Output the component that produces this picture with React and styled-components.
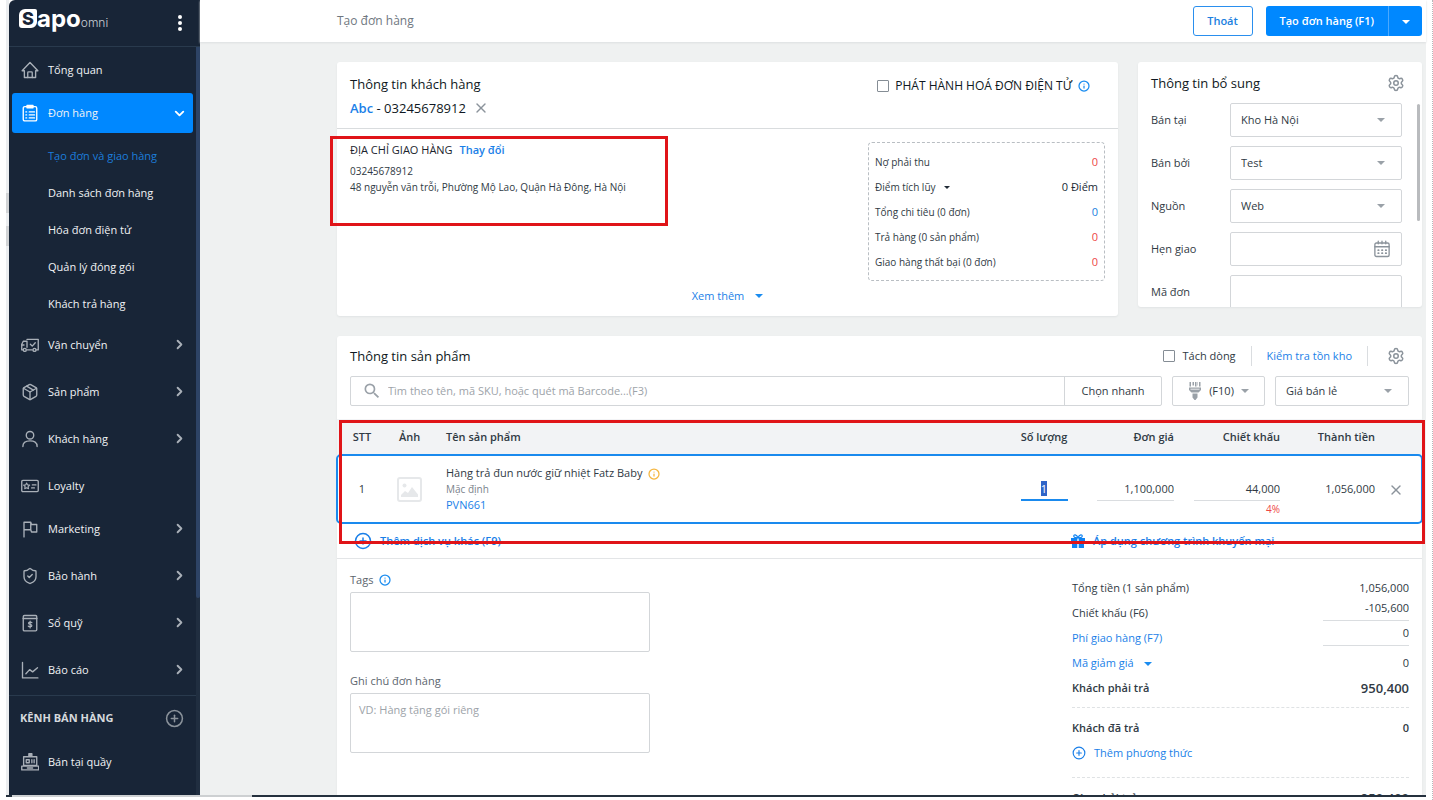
import React, { useEffect, useRef } from 'react'
import styled, { createGlobalStyle, css } from 'styled-components';
import { Package, ShieldCheck, CirclePlus, ChevronRight, ChevronDown, X, Info, Settings } from 'lucide-react';
import { MdSearch } from 'react-icons/md';

const submenu = [
  'Tạo đơn và giao hàng',
  'Danh sách đơn hàng',
  'Hóa đơn điện tử',
  'Quản lý đóng gói',
  'Khách trả hàng',
]

const menu = [
  { label: 'Vận chuyển', icon: TruckIcon, more: true },
  { label: 'Sản phẩm', icon: Package, more: true },
  { label: 'Khách hàng', icon: PersonIcon, more: true },
  { label: 'Loyalty', icon: CardIcon },
  { label: 'Marketing', icon: FlagIcon, more: true },
  { label: 'Bảo hành', icon: ShieldCheck, more: true },
  { label: 'Sổ quỹ', icon: CashBookIcon, more: true },
  { label: 'Báo cáo', icon: ReportIcon, more: true },
]

const stats = [
  { label: 'Nợ phải thu', value: '0', color: '#ee4747' },
  { label: 'Điểm tích lũy', value: '0 Điểm', color: '#212b36', caret: true },
  { label: 'Tổng chi tiêu (0 đơn)', value: '0', color: '#1a7fe0' },
  { label: 'Trả hàng (0 sản phẩm)', value: '0', color: '#ee4747' },
  { label: 'Giao hàng thất bại (0 đơn)', value: '0', color: '#ee4747' },
]

function Svg({ size = 18, children, ...rest }) {
  return (
    <svg width={size} height={size} viewBox="0 0 24 24" fill="none" stroke="currentColor" strokeWidth="1.8" strokeLinecap="round" strokeLinejoin="round" {...rest}>
      {children}
    </svg>
  )
}

function HomeIcon() {
  return (
    <Svg>
      <path d="M1.5 13 12 2l10.500 11h-3v9H4.500v-9z" />
      <path d="M9 22v-6.500a1 1 0 0 1 1-1h4a1 1 0 0 1 1 1V22" />
    </Svg>
  )
}

function OrderIcon() {
  return (
    <Svg>
      <rect x="3" y="3.500" width="18" height="19" rx="2" />
      <path d="M8 2h8v3H8z" />
      <path d="M11 10.500h7M11 14.500h7M11 18.500h7M6.500 10.500h1M6.500 14.500h1M6.500 18.500h1" />
    </Svg>
  )
}

function TruckIcon() {
  return (
    <Svg>
      <path d="M8 18.500h7M8 4.500h15v14h-2.500M2.500 18.500H1V11l2-4h5v8" />
      <circle cx="5" cy="18.500" r="2" />
      <circle cx="18" cy="18.500" r="2" />
      <path d="m12.500 11 2.500 2.500L19 9M1 12h3" />
    </Svg>
  )
}

function PersonIcon() {
  return (
    <Svg>
      <circle cx="12" cy="7" r="5" />
      <path d="M2.500 22c0-5.500 4-7.500 9.500-7.500s9.500 2 9.500 7.500" />
    </Svg>
  )
}

function CardIcon() {
  return (
    <Svg>
      <rect x="1" y="4.500" width="22" height="15" rx="1.500" />
      <path d="m7.500 8 1.200 2.500 2.800.3-2 2 .5 2.800-2.500-1.300L5 15.600l.5-2.800-2-2 2.800-.3zM15 10.500h5M14 14.500h4" strokeWidth="1.500" />
    </Svg>
  )
}

function FlagIcon() {
  return (
    <Svg>
      <path d="M4 22.500V3h9l1 3h7v10h-7l-1-3H4M13 3v10" />
    </Svg>
  )
}

function CashBookIcon() {
  return (
    <Svg>
      <rect x="3" y="2" width="18" height="20.500" rx="1.500" />
      <path d="M3 6h18" strokeWidth="2.200" />
      <path d="M14.500 11.500c-.5-.8-4.500-1.200-4.500.8 0 1.900 4.500 1 4.500 3.200 0 2-4 1.700-4.800.6M12.200 9.500v9" strokeWidth="1.600" />
    </Svg>
  )
}

function ReportIcon() {
  return (
    <Svg>
      <path d="M2 2v20.500h20.500" />
      <path d="m6.500 17 5-5.500 4 3L22 9" />
    </Svg>
  )
}

function CounterIcon() {
  return (
    <Svg>
      <path d="M10.500 1h4v3.500h-4z" fill="currentColor" />
      <path d="M3.500 5h17.500v11.500h-17.500zM1 17.500h22.500v5H1z" />
      <path d="M7 9h4v4H7zM14.500 9v4M17.500 9v4M8.500 20h7" />
    </Svg>
  )
}

function CalendarIcon() {
  return (
    <Svg>
      <rect x="2.500" y="4" width="19" height="18" rx="2" />
      <path d="M2.500 9h19M7 1.500V5M12 1.500V5M17 1.500V5" />
      <path d="M7 13.500h.5M12 13.500h.5M17 13.500h.5M7 17.500h.5M12 17.500h.5M17 17.500h.5" strokeWidth="2.400" />
    </Svg>
  )
}

function BrushIcon() {
  return (
    <svg width="14" height="18" viewBox="0 0 14 18" fill="#9aa1a8">
      <path d="M1.500 0H3v4.500H1.500zM4.500 0H6v3.500H4.500zM7 0h1.500v4.500H7zM9.500 0H10v3.500h-.500zM11 0h1.500v4.500H11zM1 5.500h12V8l-2.500 2.500h-7L1 8zM4.500 11.500h5v4l-2 2.500h-1l-2-2.500z" />
      <path d="M2.500 7.200h9" stroke="#fff" strokeWidth=".8" />
    </svg>
  )
}

function GiftIcon() {
  return (
    <svg width="14" height="14" viewBox="0 0 14 14">
      <path d="M0 4h6.300v3.500H0zM7.700 4H14v3.500H7.700zM1 8.500h5.300V14H1zM7.700 8.500H13V14H7.700z" fill="#0f83f2" />
      <path d="M7 3.800C5.500 0 2.500.200 2.800 2.400 3 3.500 5 3.800 7 3.800s4-.3 4.200-1.400C11.500.200 8.500 0 7 3.800z" fill="none" stroke="#0f83f2" strokeWidth="1.200" />
    </svg>
  )
}

function PhotoIcon() {
  return (
    <svg width="25" height="25" viewBox="0 0 25 25">
      <rect x="1" y="1" width="23" height="23" rx="2" fill="#fff" stroke="#e6e8ea" strokeWidth="2" />
      <circle cx="7.500" cy="8.500" r="2" fill="#e6e8ea" />
      <path d="M4 20v-2l4-4 3 2 4-6 6 7.500V20z" fill="#e6e8ea" />
    </svg>
  )
}

function Select({ id, label, value, width }) {
  return (
    <SelectWrap $width={width}>
      <NativeSelect id={id} aria-label={label} defaultValue={value}>
        <option>{value}</option>
      </NativeSelect>
      <SelectCaret><Caret $color="#9aa1a8" /></SelectCaret>
    </SelectWrap>
  )
}

function Sidebar() {
  return (
    <SideColumn>
      <SideHead>
        <Logo href="#">
          <LogoMark>S</LogoMark>
          <LogoName>apo</LogoName>
          <LogoSub>omni</LogoSub>
        </Logo>
        <DotsButton aria-label="Menu"><i /><i /><i /></DotsButton>
      </SideHead>
      <SideBody>
        <Nav>
          <NavItem href="#"><HomeIcon />Tổng quan</NavItem>
          <NavItem href="#" $active><OrderIcon /><NavText>Đơn hàng</NavText><ChevronDown size={15} strokeWidth={3} /></NavItem>
          <SubList>
            {submenu.map((s, i) => <SubItem key={s} href="#" $active={i === 0}>{s}</SubItem>)}
          </SubList>
          {menu.map(({ label, icon: Icon, more }) => (
            <NavItem key={label} href="#" $more={more}>
              <Icon size={18} strokeWidth={1.8} />
              <NavText>{label}</NavText>
              {more && <ChevronRight size={15} strokeWidth={3} />}
            </NavItem>
          ))}
          <Channels>
            KÊNH BÁN HÀNG
            <IconButton aria-label="Thêm kênh"><CirclePlus size={19} strokeWidth={1.900} /></IconButton>
          </Channels>
          <NavItem href="#"><CounterIcon />Bán tại quầy</NavItem>
        </Nav>
        <SideTrack><SideThumb /></SideTrack>
      </SideBody>
    </SideColumn>
  )
}

function Customer() {
  return (
    <Card>
      <CustomerHead>
        <div>
          <Title>Thông tin khách hàng</Title>
          <CustomerLine>
            <a href="#">Abc</a>&nbsp;- 03245678912
            <IconButton aria-label="Bỏ chọn"><X size={16} strokeWidth={2} /></IconButton>
          </CustomerLine>
        </div>
        <InvoiceLabel>
          <Check type="checkbox" />
          PHÁT HÀNH HOÁ ĐƠN ĐIỆN TỬ
          <Info size={12} color="#1a8cf0" strokeWidth={2.500} />
        </InvoiceLabel>
      </CustomerHead>
      <CustomerBody>
        <Address>
          <AddressTitle>ĐỊA CHỈ GIAO HÀNG <a href="#">Thay đổi</a></AddressTitle>
          <p>03245678912</p>
          <p>48 nguyễn văn trỗi, Phường Mộ Lao, Quận Hà Đông, Hà Nội</p>
          <AddressMark />
        </Address>
        <StatBox>
          {stats.map((s) => (
            <StatRow key={s.label}>
              <StatName>{s.label}{s.caret && <Caret $small $color="#212b36" />}</StatName>
              <StatValue $color={s.color}>{s.value}</StatValue>
            </StatRow>
          ))}
        </StatBox>
      </CustomerBody>
      <MoreButton>Xem thêm<Caret $color="#1a8cf0" /></MoreButton>
    </Card>
  )
}

function Extra() {
  return (
    <ExtraCard>
      <ExtraHead>
        <Title>Thông tin bổ sung</Title>
        <IconButton aria-label="Cài đặt"><Settings size={18} strokeWidth={2} /></IconButton>
      </ExtraHead>
      <ExtraBody>
        <Fields>
          <label htmlFor="store">Bán tại</label>
          <Select id="store" value="Kho Hà Nội" />
          <label htmlFor="seller">Bán bởi</label>
          <Select id="seller" value="Test" />
          <label htmlFor="source">Nguồn</label>
          <Select id="source" value="Web" />
          <label htmlFor="date">Hẹn giao</label>
          <DateBox>
            <input id="date" type="text" />
            <IconButton aria-label="Chọn ngày"><CalendarIcon /></IconButton>
          </DateBox>
          <label htmlFor="code">Mã đơn</label>
          <TextBox id="code" type="text" />
        </Fields>
        <ExtraThumb />
      </ExtraBody>
    </ExtraCard>
  )
}

function Products() {
  const qty = useRef(null)

  useEffect(() => {
    qty.current.focus()
    qty.current.select()
  }, [])

  return (
    <ProductCard>
      <ProductHead>
        <Title>Thông tin sản phẩm</Title>
        <HeadTools>
          <label><Check type="checkbox" />Tách dòng</label>
          <StockLink href="#">Kiểm tra tồn kho</StockLink>
          <IconButton aria-label="Cài đặt"><Settings size={18} strokeWidth={2} /></IconButton>
        </HeadTools>
      </ProductHead>
      <SearchRow>
        <SearchBox>
          <MdSearch size={20} />
          <input aria-label="Tìm sản phẩm" placeholder="Tìm theo tên, mã SKU, hoặc quét mã Barcode...(F3)" />
          <QuickButton>Chọn nhanh</QuickButton>
        </SearchBox>
        <ScanButton><BrushIcon />(F10)<Caret $color="#9aa1a8" /></ScanButton>
        <Select label="Giá bán" value="Giá bán lẻ" width="134px" />
      </SearchRow>
      <Lines>
        <Table>
          <colgroup>
            <col width="50" /><col width="45" /><col /><col width="68" /><col width="96" /><col width="106" /><col width="95" /><col width="47" />
          </colgroup>
          <thead>
            <tr>
              <Th $align="center">STT</Th>
              <Th $align="center">Ảnh</Th>
              <Th $name>Tên sản phẩm</Th>
              <Th $align="center">Số lượng</Th>
              <Th $align="right">Đơn giá</Th>
              <Th $align="right">Chiết khấu</Th>
              <Th $align="right">Thành tiền</Th>
              <Th />
            </tr>
          </thead>
          <tbody>
            <Line>
              <Td $align="center">1</Td>
              <Td $align="center"><PhotoIcon /></Td>
              <Td $name>
                <ProductName>Hàng trả đun nước giữ nhiệt Fatz Baby <Info size={12} color="#f5b63f" strokeWidth={2.500} /></ProductName>
                <Variant>Mặc định</Variant>
                <a href="#">PVN661</a>
              </Td>
              <Td $align="center" $top><LineInput ref={qty} aria-label="Số lượng" defaultValue="1" $qty $width="47px" /></Td>
              <Td $align="right" $top><LineInput aria-label="Đơn giá" defaultValue="1,100,000" $width="77px" /></Td>
              <Td $align="right" $top>
                <LineInput aria-label="Chiết khấu" defaultValue="44,000" $width="86px" />
                <Percent>4%</Percent>
              </Td>
              <Td $align="right">1,056,000</Td>
              <DeleteTd><IconButton aria-label="Xóa"><X size={16} strokeWidth={2} /></IconButton></DeleteTd>
            </Line>
          </tbody>
        </Table>
        <ServiceRow>
          <LinkButton $strong><CirclePlus size={18} />Thêm dịch vụ khác (F9)</LinkButton>
          <Promo><LinkButton $strong><GiftIcon />Áp dụng chương trình khuyến mại</LinkButton></Promo>
        </ServiceRow>
        <LinesMark />
      </Lines>
      <Bottom>
        <Notes>
          <label htmlFor="tags">Tags <Info size={12} color="#1a8cf0" strokeWidth={2.500} /></label>
          <Area id="tags" />
          <label htmlFor="note">Ghi chú đơn hàng</label>
          <Area id="note" placeholder="VD: Hàng tặng gói riêng" />
        </Notes>
        <Summary>
          <SumRow><span>Tổng tiền (1 sản phẩm)</span><span>1,056,000</span></SumRow>
          <SumRow><label htmlFor="discount">Chiết khấu (F6)</label><SumInput id="discount" defaultValue="-105,600" /></SumRow>
          <SumRow><a href="#">Phí giao hàng (F7)</a><SumInput aria-label="Phí giao hàng" defaultValue="0" /></SumRow>
          <SumRow><a href="#">Mã giảm giá<Caret $wide $color="#1a8cf0" /></a><span>0</span></SumRow>
          <SumRow $strong><span>Khách phải trả</span><Amount>950,400</Amount></SumRow>
          <Dashes />
          <SumRow $strong><span>Khách đã trả</span><span>0</span></SumRow>
          <SumRow><LinkButton><CirclePlus size={14} />Thêm phương thức</LinkButton></SumRow>
          <Dashes $gap />
          <SumRow $strong><span>Còn phải trả</span><Amount>950,400</Amount></SumRow>
        </Summary>
      </Bottom>
    </ProductCard>
  )
}

function App() {
  return (
    <>
      <GlobalStyle />
      <Frame>
        <Window>
          <Gutter><i /><i /></Gutter>
          <Sidebar />
          <Main>
            <TopBar>
              <h1>Tạo đơn hàng</h1>
              <ExitButton>Thoát</ExitButton>
              <CreateButton>Tạo đơn hàng (F1)</CreateButton>
              <CreateMore aria-label="Tùy chọn khác"><Caret $color="#fff" /></CreateMore>
            </TopBar>
            <Content>
              <Customer />
              <Extra />
              <Products />
            </Content>
          </Main>
        </Window>
        <TaskLine><i /></TaskLine>
      </Frame>
    </>
  )
}

export default App

const GlobalStyle = createGlobalStyle`
* {
  box-sizing: border-box;
}
body {
  margin: 0;
  background: #fff;
  color: #303a44;
  font-family: "Open Sans", "Noto Sans", sans-serif;
  font-size: 11px;
  line-height: 16px;
}
h1, h2, p {
  margin: 0;
}
a {
  color: #1a7fe8;
  text-decoration: none;
}
button, input, select, textarea {
  font: inherit;
  color: inherit;
}
button {
  border: 0;
  padding: 0;
  background: none;
}
input {
  border: 0;
  padding: 0;
  min-width: 0;
  background: none;
  outline: none;
}
::placeholder {
  color: #9da3a9;
}
svg {
  flex: none;
}
`

const Frame = styled.div`
height: 100vh;
display: flex;
flex-direction: column;
padding: 0 6px 3px;
border-right: 1px dotted #b5b8bb;
overflow: hidden;
`

const Window = styled.div`
display: flex;
flex: 1;
min-height: 0;
`

const Gutter = styled.div`
width: 3px;
padding-top: 193px;
background: #eceef0;

i {
  display: block;
  height: 20px;
  margin-bottom: 13px;
  background: #d2d4d6;
}
`

const TaskLine = styled.div`
height: 2px;
background: #25313e;

i {
  display: block;
  width: 240px;
  height: 2px;
  margin-left: 6px;
  background: #cdd0d2;
}
`

const SideColumn = styled.aside`
width: 191px;
display: flex;
flex-direction: column;
background: #182537;
color: #f1f3f5;
border-top-left-radius: 6px;
overflow: hidden;
`

const SideHead = styled.div`
height: 47px;
flex: none;
display: flex;
align-items: flex-start;
justify-content: space-between;
padding: 9px 18px 0 10px;
border-bottom: 1px solid #293a4d;
`

const Logo = styled.a`
display: flex;
color: #fff;
font-family: Inter, sans-serif;
line-height: 20px;
`

const LogoMark = styled.span`
width: 18px;
height: 19px;
border-radius: 6px 2px 6px 3px;
background: #fff;
color: #182537;
font-size: 18px;
font-weight: 800;
line-height: 19px;
text-align: center;
`

const LogoName = styled.span`
font-size: 24px;
font-weight: 700;
`

const LogoSub = styled.span`
padding-top: 4px;
font-size: 12px;
font-weight: 300;
color: #c9ced4;
`

const DotsButton = styled.button`
display: flex;
flex-direction: column;
gap: 2px;
padding-top: 6px;

i {
  width: 4px;
  height: 4px;
  border-radius: 2px;
  background: #fff;
}
`

const SideBody = styled.div`
display: flex;
flex: 1;
min-height: 0;
`

const Nav = styled.nav`
flex: 1;
padding-top: 1px;
`

const SideTrack = styled.div`
width: 4px;
background: #202e40;
`

const SideThumb = styled.div`
height: 551px;
border-radius: 0 0 2px 2px;
background: #2d4365;
`

const NavItem = styled.a`
display: flex;
align-items: center;
gap: 9px;
height: 43px;
margin-bottom: ${(p) => (p.$more ? '4px' : '0')};
padding: 0 9px 0 12px;
color: #f1f3f5;

svg {
  color: #a9b0b8;
}

${(p) => p.$active && css`
  height: 40px;
  margin: 2px 3px 4px;
  padding: 0 6px 0 9px;
  border-radius: 3px;
  background: #0088ff;

  svg {
    color: #fff;
  }
`}
`

const NavText = styled.span`
flex: 1;
`

const SubList = styled.div`
display: flex;
flex-direction: column;
padding-bottom: 1px;
`

const SubItem = styled.a`
height: 37px;
padding-left: 39px;
line-height: 37px;
color: ${(p) => (p.$active ? '#1c7ddb' : '#f1f3f5')};
`

const Channels = styled.div`
display: flex;
align-items: center;
justify-content: space-between;
height: 45px;
padding: 0 12px 0 11px;
border-top: 1px solid #293a4d;
font-weight: 700;
color: #d5d9dd;
`

const IconButton = styled.button`
display: inline-flex;
align-items: center;
color: #8b939b;
`

const Main = styled.main`
flex: 1;
min-width: 0;
display: flex;
flex-direction: column;
background: #eff1f1;
`

const TopBar = styled.header`
display: flex;
align-items: center;
height: 42px;
flex: none;
padding: 0 4px 0 137px;
background: #fff;
box-shadow: 0 1px 2px #dcdfe0;

h1 {
  flex: 1;
  font-size: 12px;
  font-weight: 400;
  color: #6f7780;
}
`

const ExitButton = styled.button`
height: 30px;
width: 60px;
margin-right: 13px;
border: 1px solid #2a8fee;
border-radius: 3px;
font-weight: 600;
color: #1a7fe0;
`

const CreateButton = styled.button`
height: 30px;
padding: 0 14px;
border-radius: 3px 0 0 3px;
background: #0088ff;
color: #fff;
font-weight: 600;
`

const CreateMore = styled.button`
height: 30px;
width: 34px;
border-left: 1px solid #4aa9ff;
border-radius: 0 3px 3px 0;
background: #0088ff;
`

const Caret = styled.i`
display: inline-block;
vertical-align: middle;
margin-left: ${(p) => (p.$wide ? '10px' : p.$small ? '8px' : '0')};
border: ${(p) => (p.$small ? '3px' : '4px')} solid transparent;
border-top-color: ${(p) => p.$color};
border-bottom: 0;
`

const Content = styled.div`
flex: 1;
min-height: 0;
display: grid;
grid-template-columns: minmax(0, 1fr) 284px;
grid-template-rows: auto auto;
align-items: start;
align-content: start;
gap: 20px;
padding: 20px 4px 0 137px;
overflow: hidden;
`

const Card = styled.section`
border-radius: 3px;
background: #fff;
box-shadow: 0 1px 2px #e0e3e4;
`

const Title = styled.h2`
font-size: 13px;
line-height: 24px;
font-weight: 500;
color: #0f1822;
`

const CustomerHead = styled.div`
display: flex;
justify-content: space-between;
padding: 10px 28px 8px 13px;
border-bottom: 1px solid #d9dcde;
`

const CustomerLine = styled.div`
display: flex;
align-items: center;
height: 24px;
font-size: 13px;
color: #0f1822;

a {
  font-weight: 600;
}
button {
  margin-left: 7px;
}
`

const InvoiceLabel = styled.label`
display: flex;
align-items: center;
gap: 6px;
height: 28px;
font-size: 12px;
color: #0f1822;
`

const Check = styled.input`
appearance: none;
width: 12px;
height: 12px;
margin: 0;
border: 1px solid #858d95;
border-radius: 1px;
`

const CustomerBody = styled.div`
display: flex;
justify-content: space-between;
padding: 13px 13px 0;
`

const Address = styled.div`
position: relative;
font-size: 10px;
`

const AddressTitle = styled.div`
margin-bottom: 5px;
font-size: 11px;
color: #1b242e;

a {
  margin-left: 4px;
  font-weight: 600;
}
`

const mark = css`
position: absolute;
border: 3px solid #e01418;
pointer-events: none;
`

const AddressMark = styled.div`
${mark}
top: -6px;
left: -20px;
width: 338px;
height: 90px;
`

const StatBox = styled.div`
width: 237px;
padding: 6px;
border: 1px dashed #b9bec3;
border-radius: 4px;
`

const StatRow = styled.div`
display: flex;
align-items: center;
justify-content: space-between;
height: 25px;
`

const StatName = styled.span`
font-size: 10px;
`

const StatValue = styled.span`
color: ${(p) => p.$color};
`

const MoreButton = styled.button`
display: flex;
align-items: center;
gap: 11px;
height: 29px;
margin: 0 auto 6px;
color: #1a7fe8;
`

const ExtraCard = styled(Card)`
overflow: hidden;
`

const ExtraHead = styled.div`
display: flex;
align-items: center;
justify-content: space-between;
height: 41px;
padding: 0 17px 0 13px;
`

const ExtraBody = styled.div`
display: flex;
max-height: 204px;
overflow: hidden;
padding-right: 2px;
`

const Fields = styled.div`
flex: 1;
min-width: 0;
display: grid;
grid-template-columns: 79px minmax(0, 1fr);
grid-auto-rows: 34px;
align-items: center;
row-gap: 9px;
padding: 0 15px 0 13px;
`

const ExtraThumb = styled.div`
flex: none;
width: 3px;
height: 117px;
margin-top: 1px;
border-radius: 2px;
background: #b9bbbe;
`

const box = css`
border: 1px solid #d3d6d9;
border-radius: 2px;
background: #fff;
`

const SelectWrap = styled.div`
${box}
position: relative;
align-self: stretch;
display: flex;
width: ${(p) => p.$width || 'auto'};
`

const NativeSelect = styled.select`
appearance: none;
flex: 1;
min-width: 0;
border: 0;
padding: 0 28px 0 10px;
background: transparent;
`

const SelectCaret = styled.span`
position: absolute;
right: 16px;
top: 0;
bottom: 0;
display: flex;
align-items: center;
pointer-events: none;
`

const DateBox = styled.div`
${box}
align-self: stretch;
display: flex;
padding: 0 10px;

input {
  flex: 1;
}
`

const TextBox = styled.input`
${box}
align-self: stretch;
padding: 0 10px;
`

const ProductCard = styled(Card)`
grid-column: 1 / -1;
`

const ProductHead = styled.div`
display: flex;
align-items: center;
justify-content: space-between;
height: 40px;
padding: 0 17px 0 13px;
`

const HeadTools = styled.div`
display: flex;
align-items: center;

label {
  display: flex;
  align-items: center;
  gap: 7px;
}
`

const StockLink = styled.a`
margin: 0 19px 0 15px;
padding: 2px 15px;
border: 1px solid #dadde0;
border-width: 0 1px;
`

const SearchRow = styled.div`
display: flex;
gap: 10px;
height: 30px;
margin: 0 13px 13px;
`

const SearchBox = styled.div`
${box}
flex: 1;
display: flex;
align-items: center;
gap: 6px;
padding-left: 11px;

svg {
  color: #9aa1a8;
}
input {
  flex: 1;
}
`

const QuickButton = styled.button`
align-self: stretch;
width: 97px;
border-left: 1px solid #d3d6d9;
`

const ScanButton = styled.button`
${box}
display: flex;
align-items: center;
justify-content: center;
gap: 7px;
width: 93px;
`

const Lines = styled.div`
position: relative;
border-bottom: 1px solid #e3e5e7;
`

const LinesMark = styled.div`
${mark}
top: 1px;
left: 2px;
right: -3px;
height: 124px;
`

const Table = styled.table`
width: 100%;
table-layout: fixed;
border-collapse: collapse;
`

const Th = styled.th`
height: 36px;
padding: 0 0 0 ${(p) => (p.$name ? '14px' : '0')};
background: #f2f3f5;
text-align: ${(p) => p.$align || 'left'};
font-weight: 600;
`

const Line = styled.tr`
outline: 2px solid #1a8aee;
outline-offset: -1px;
border-radius: 4px;
`

const Td = styled.td`
height: 68px;
padding: ${(p) => (p.$top ? '22px' : '0')} 0 0 ${(p) => (p.$name ? '14px' : '0')};
text-align: ${(p) => p.$align || 'left'};
vertical-align: ${(p) => (p.$top ? 'top' : 'middle')};

svg {
  vertical-align: middle;
}
`

const DeleteTd = styled(Td)`
padding-left: 13px;

button {
  vertical-align: middle;
}
`

const ProductName = styled.div`
svg {
  margin-left: 3px;
}
`

const Variant = styled.div`
font-size: 10px;
color: #7a828b;
`

const LineInput = styled.input`
display: inline-block;
width: ${(p) => p.$width};
height: 24px;
border-bottom: ${(p) => (p.$qty ? '2px solid #1a8aee' : '1px solid #dadde0')};
text-align: ${(p) => (p.$qty ? 'center' : 'right')};

&::selection {
  background: #2f64c8;
  color: #fff;
}
`

const Percent = styled.div`
font-size: 10px;
color: #ee4747;
`

const ServiceRow = styled.div`
display: flex;
align-items: center;
justify-content: space-between;
height: 35px;
padding-left: 17px;
`

const LinkButton = styled.button`
display: flex;
align-items: center;
gap: 8px;
font-weight: ${(p) => (p.$strong ? 600 : 400)};
color: #1a7fe8;
`

const Promo = styled.div`
width: 351px;
`

const Bottom = styled.div`
display: flex;
justify-content: space-between;
padding: 0 13px;
`

const Notes = styled.div`
display: flex;
flex-direction: column;
width: 300px;
padding-top: 11px;

label {
  display: flex;
  align-items: center;
  gap: 6px;
  height: 19px;
  margin-bottom: 3px;
  color: #5c656e;
}
`

const Area = styled.textarea`
${box}
display: block;
height: 60px;
margin: 0 0 19px;
padding: 8px;
resize: none;
`

const Summary = styled.div`
width: 337px;
padding-top: 16px;
`

const SumRow = styled.div`
display: flex;
align-items: center;
justify-content: space-between;
height: 25px;
font-weight: ${(p) => (p.$strong ? 600 : 400)};
`

const SumInput = styled.input`
align-self: flex-start;
width: 86px;
height: 21px;
padding-bottom: 5px;
border-bottom: 1px solid #dadde0;
text-align: right;
`

const Amount = styled.span`
font-size: 13px;
`

const Dashes = styled.div`
margin: ${(p) => (p.$gap ? '12px' : '7px')} 0 7px;
border-top: 1px dashed #dfe2e4;
`
